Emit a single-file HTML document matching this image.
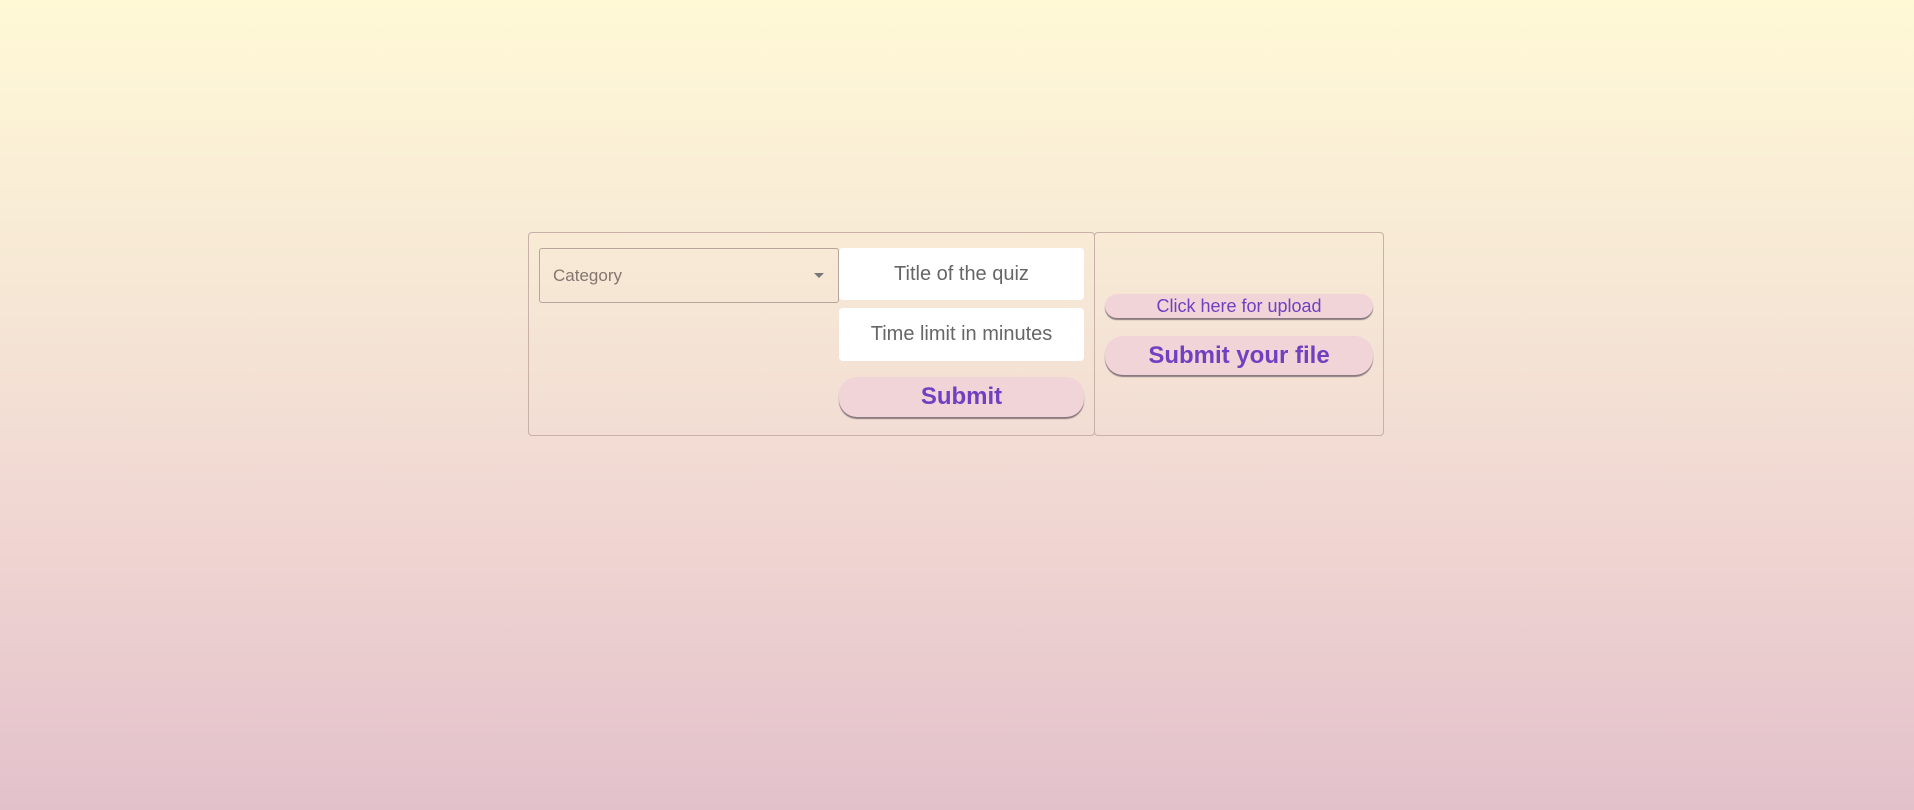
<!DOCTYPE html>
<html><head><meta charset="utf-8"><style>
html,body{margin:0;padding:0;width:1914px;height:810px;overflow:hidden}
body{background:linear-gradient(to bottom,#fff9d6 0%,#f5e5d5 40%,#f0d6d2 65%,#e3c1cb 100%);font-family:"Liberation Sans",sans-serif;position:relative}
.box{position:absolute;border:1px solid #c9b0a8;border-radius:4px;box-sizing:border-box}
.el{position:absolute;box-sizing:border-box;display:flex;align-items:center;justify-content:center}
.inp{background:#fff;border-radius:4px;color:#666;font-size:20px}
.btn{background:#f0d4d8;border-radius:16px;color:#7040c0;font-weight:bold;box-shadow:0 2px 1px #8a7a80}
</style></head><body>
<div class="box" style="left:528px;top:232px;width:567px;height:204px"></div>
<div class="box" style="left:1094px;top:232px;width:290px;height:204px"></div>
<div class="el" style="left:539px;top:248px;width:300px;height:55px;border:1px solid #b8a49a;border-radius:3px;justify-content:space-between;padding:0 14px 0 13px;color:#857570;font-size:17px">
<span>Category</span><span style="width:0;height:0;border-left:5px solid transparent;border-right:5px solid transparent;border-top:5px solid #777"></span></div>
<div class="el inp" style="left:839px;top:248px;width:245px;height:52px">Title of the quiz</div>
<div class="el inp" style="left:839px;top:308px;width:245px;height:53px">Time limit in minutes</div>
<div class="el btn" style="left:839px;top:377px;width:245px;height:40px;font-size:24px;border-radius:18px">Submit</div>
<div class="el btn" style="left:1105px;top:294px;width:268px;height:24px;font-size:18px;font-weight:normal;border-radius:12px">Click here for upload</div>
<div class="el btn" style="left:1105px;top:336px;width:268px;height:39px;font-size:24px;border-radius:18px">Submit your file</div>
</body></html>
